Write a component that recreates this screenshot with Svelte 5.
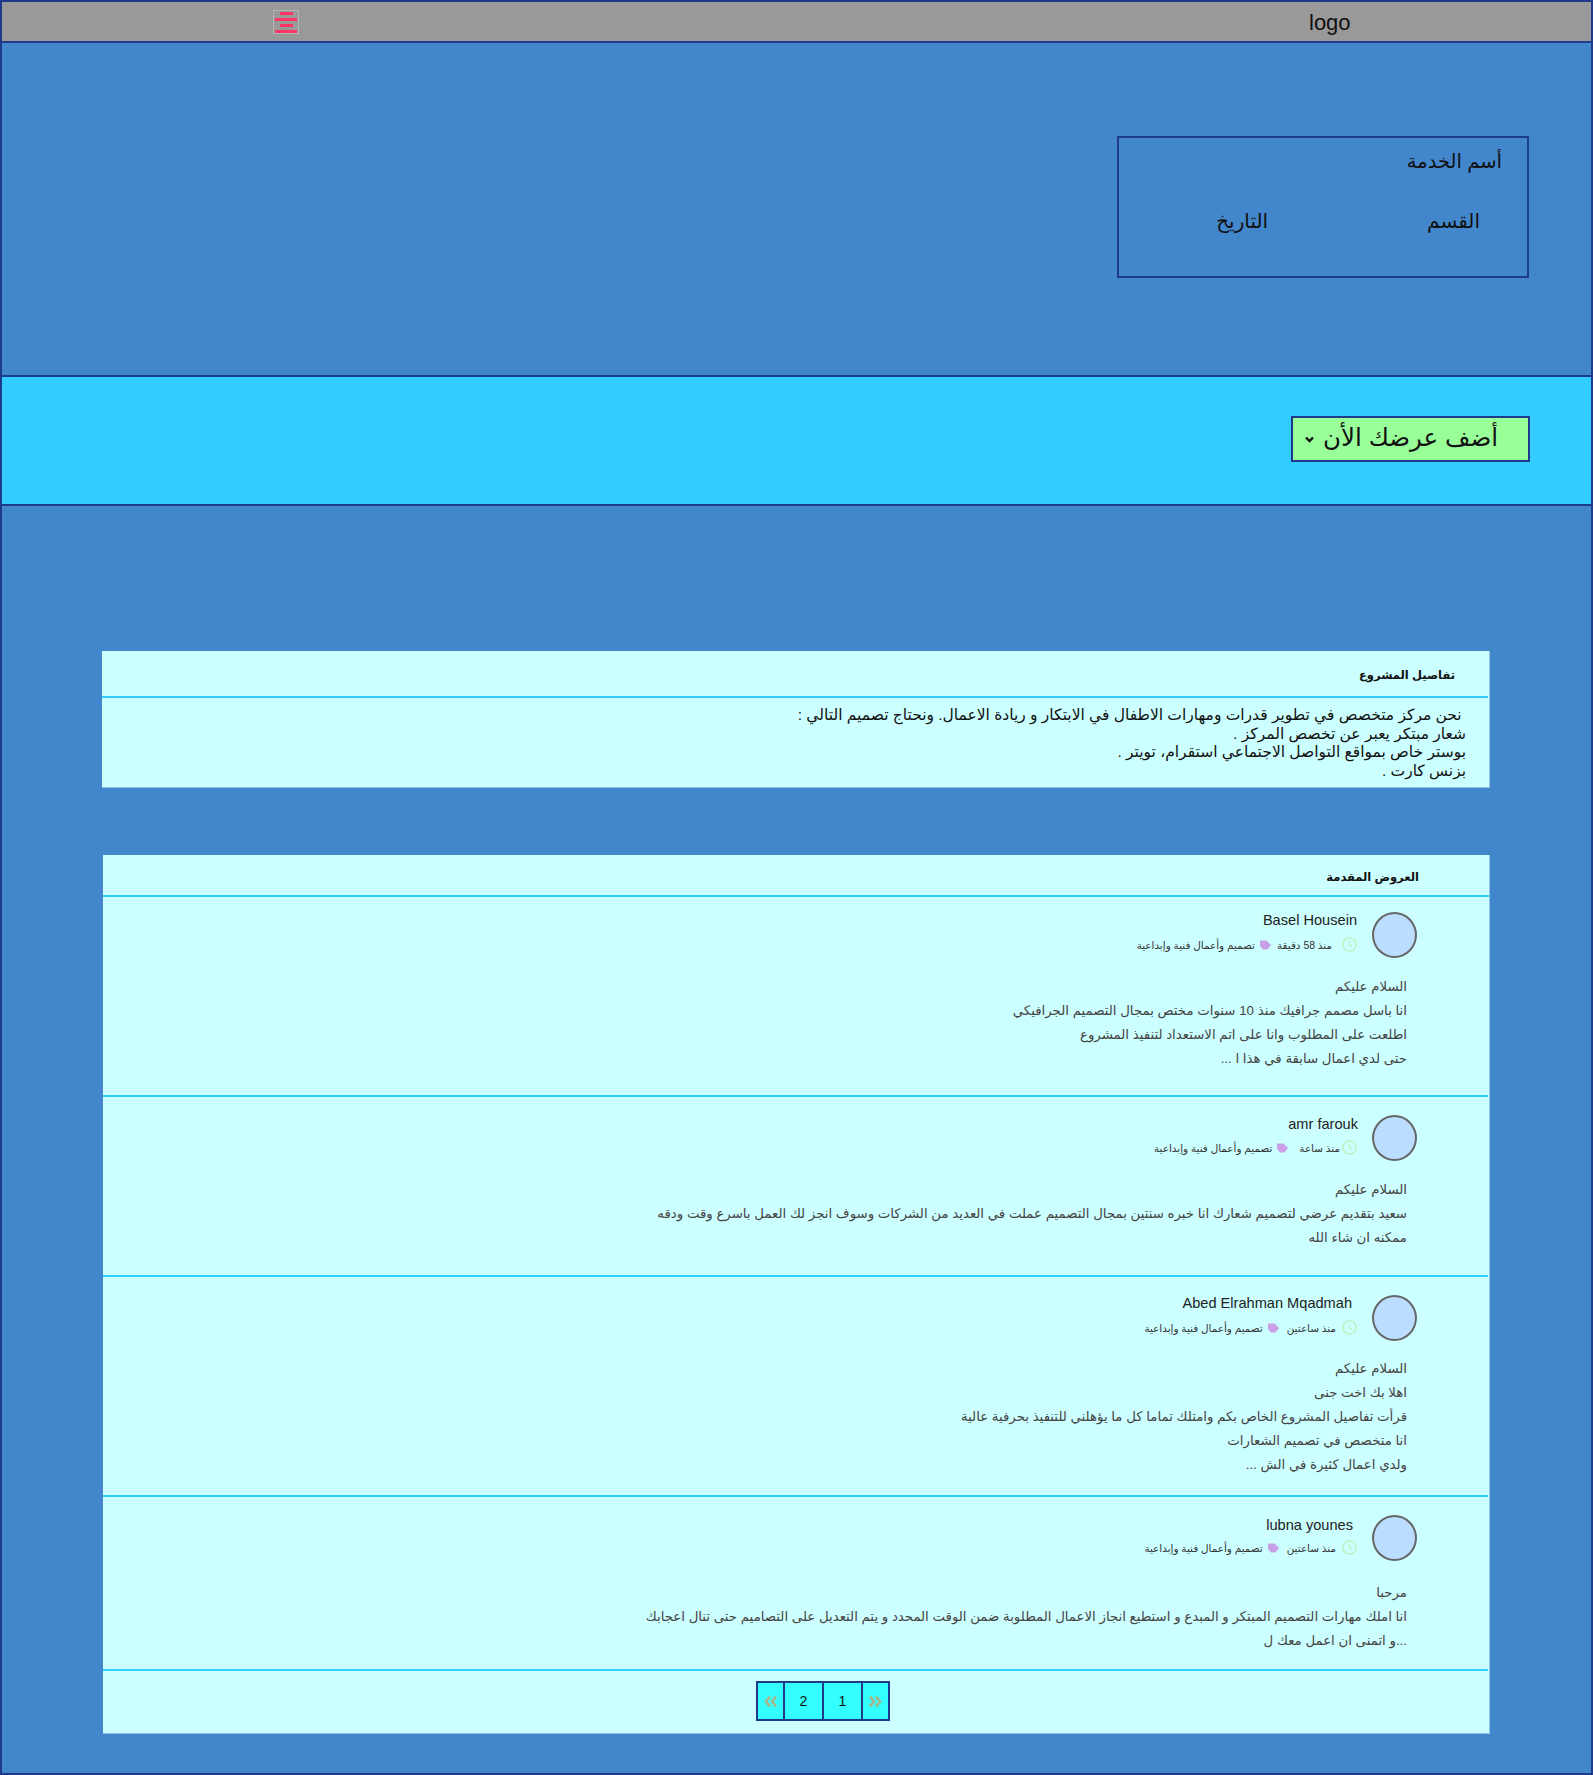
<script>
  const offers = [
    {
      name: "Basel Housein",
      time: "منذ 58 دقيقة",
      cat: "تصميم وأعمال فنية وإبداعية",
      lines: [
        "السلام عليكم",
        "انا باسل مصمم جرافيك منذ 10 سنوات مختص بمجال التصميم الجرافيكي",
        "اطلعت على المطلوب وانا على اتم الاستعداد لتنفيذ المشروع",
        "حتى لدي اعمال سابقة في هذا ا ...",
      ],
    },
    {
      name: "amr farouk",
      time: "منذ ساعة",
      cat: "تصميم وأعمال فنية وإبداعية",
      lines: [
        "السلام عليكم",
        "سعيد بتقديم عرضي لتصميم شعارك انا خبره سنتين بمجال التصميم عملت في العديد من الشركات وسوف انجز لك العمل باسرع وقت ودقه",
        "ممكنه ان شاء الله",
      ],
    },
    {
      name: "Abed Elrahman Mqadmah",
      time: "منذ ساعتين",
      cat: "تصميم وأعمال فنية وإبداعية",
      lines: [
        "السلام عليكم",
        "اهلا بك اخت جنى",
        "قرأت تفاصيل المشروع الخاص بكم وامتلك تماما كل ما يؤهلني للتنفيذ بحرفية عالية",
        "انا متخصص في تصميم الشعارات",
        "ولدي اعمال كثيرة في الش ...",
      ],
    },
    {
      name: "lubna younes",
      time: "منذ ساعتين",
      cat: "تصميم وأعمال فنية وإبداعية",
      lines: [
        "مرحبا",
        "انا املك مهارات التصميم المبتكر و المبدع و استطيع انجاز الاعمال المطلوبة ضمن الوقت المحدد و يتم التعديل على التصاميم حتى تنال اعجابك",
        "...و اتمنى ان اعمل معك ل",
      ],
    },
  ];
</script>

<div class="page">
  <header class="topbar">
    <button class="menu" aria-label="menu">
      <span class="short"></span>
      <span></span>
      <span class="short"></span>
      <span></span>
    </button>
    <div class="logo">logo</div>
  </header>

  <section class="hero">
    <div class="service">
      <h2>أسم الخدمة</h2>
      <div class="meta">
        <span>القسم</span>
        <span>التاريخ</span>
      </div>
    </div>
  </section>

  <section class="action">
    <button class="add">
      <span>أضف عرضك الأن</span>
      <svg width="9" height="7" viewBox="0 0 9 7"><path d="M1 1.5 4.5 5 8 1.5" fill="none" stroke="#111" stroke-width="2.4" /></svg>
    </button>
  </section>

  <main class="content">
    <div class="card details">
      <h3>تفاصيل المشروع</h3>
      <div class="details-body">
        <p>&nbsp;نحن مركز متخصص في تطوير قدرات ومهارات الاطفال في الابتكار و ريادة الاعمال. ونحتاج تصميم التالي :</p>
        <p>شعار مبتكر يعبر عن تخصص المركز .</p>
        <p>بوستر خاص بمواقع التواصل الاجتماعي استقرام، تويتر .</p>
        <p>بزنس كارت .</p>
      </div>
    </div>

    <div class="card offers">
      <h3>العروض المقدمة</h3>
      {#each offers as offer}
        <article class="offer">
          <div class="head">
            <div class="avatar"></div>
            <div class="who">
              <div class="name">{offer.name}</div>
              <div class="info">
                <svg class="clock" width="15" height="15" viewBox="0 0 15 15"><circle cx="7.5" cy="7.5" r="6.6" fill="none" stroke="#bdf0bd" stroke-width="1.4" /><path d="M7.5 3.8v4.2l2.4 1.1" fill="none" stroke="#bdf0bd" stroke-width="1.2" /></svg>
                <span class="time">{offer.time}</span>
                <svg class="tag" width="11" height="10" viewBox="0 0 11 10"><path d="M0 .5H6.5L11 5 7.5 9.5H3L0 6z" fill="#c9a0e6" /></svg>
                <span class="cat">{offer.cat}</span>
              </div>
            </div>
          </div>
          <div class="text">
            {#each offer.lines as line}
              <div>{line}</div>
            {/each}
          </div>
        </article>
      {/each}
      <nav class="pager">
        <span class="arrow">
          <svg width="13" height="11" viewBox="0 0 13 11"><path d="M6 .5 2 5.5l4 5M12 .5l-4 5 4 5" fill="none" stroke="#a3b88f" stroke-width="2.8" /></svg>
        </span>
        <span>2</span>
        <span>1</span>
        <span class="arrow">
          <svg width="13" height="11" viewBox="0 0 13 11"><path d="M1 .5l4 5-4 5M7 .5l4 5-4 5" fill="none" stroke="#a3b88f" stroke-width="2.8" /></svg>
        </span>
      </nav>
    </div>
  </main>
</div>

<style>
  :global(body) {
    margin: 0;
    background: #4286cc;
  }

  .page {
    width: 1593px;
    height: 1775px;
    font-family: "Liberation Sans", "DejaVu Sans", sans-serif;
    color: #111;
    overflow: hidden;
  }

  .topbar {
    height: 43px;
    box-sizing: border-box;
    background: #999;
    border: 2px solid #1f3a8a;
    display: flex;
    align-items: center;
  }

  .logo {
    margin-left: 1010px;
    padding-top: 2px;
    font-size: 22px;
  }

  .menu {
    margin: 1px 0 0 271px;
    width: 26px;
    height: 24px;
    padding: 1px 0 0;
    box-sizing: border-box;
    background: #999;
    border: 1px solid #b5b5b5;
    display: flex;
    flex-direction: column;
    align-items: center;
    gap: 2.5px;
  }

  .menu span {
    display: block;
    width: 22px;
    height: 3.5px;
    background: #ff3366;
  }

  .menu .short {
    width: 13px;
  }

  .hero {
    height: 332px;
    box-sizing: border-box;
    border-left: 2px solid #1f3a8a;
    border-right: 2px solid #1f3a8a;
    padding: 93px 62px 0 0;
    display: flex;
    justify-content: flex-end;
  }

  .service {
    width: 412px;
    height: 142px;
    box-sizing: border-box;
    border: 2px solid #1f3a8a;
    direction: rtl;
    padding: 8px 25px 0 0;
  }

  .service h2 {
    margin: 0;
    font-size: 19.5px;
    font-weight: 400;
    line-height: 30px;
  }

  .meta {
    display: flex;
    gap: 159px;
    margin-top: 30px;
    padding-right: 22px;
    font-size: 20px;
    line-height: 30px;
  }

  .action {
    height: 131px;
    box-sizing: border-box;
    background: #33ccff;
    border: 2px solid #1f3a8a;
    display: flex;
    justify-content: flex-end;
    padding: 39px 61px 0 0;
  }

  .add {
    width: 239px;
    height: 46px;
    box-sizing: border-box;
    background: #99ff99;
    border: 2px solid #1f3a8a;
    direction: rtl;
    display: flex;
    align-items: center;
    justify-content: space-between;
    padding: 0 30px 3px 12px;
    font: inherit;
    font-size: 24.5px;
    color: #111;
  }

  .add svg {
    margin-top: 4px;
  }

  .content {
    height: 1269px;
    box-sizing: border-box;
    border: 2px solid #1f3a8a;
    border-top: 0;
    padding: 145px 101px 0 100px;
    direction: rtl;
  }

  .card {
    background: #ccffff;
    border-right: 1px solid #8cc4e4;
    border-bottom: 1px solid #8cc4e4;
    box-sizing: border-box;
  }

  .card h3 {
    margin: 0;
    font-size: 11.5px;
    font-weight: 700;
    border-bottom: 2px solid #33ccff;
    box-sizing: border-box;
  }

  .details {
    height: 137px;
    margin-bottom: 67px;
  }

  .details h3 {
    padding: 17px 33px 0 0;
    height: 47px;
    margin-right: 1px;
  }

  .details-body {
    padding: 8px 23px 0 0;
    font-size: 15.5px;
    line-height: 18.5px;
  }

  .details-body p {
    margin: 0;
  }

  .offers {
    height: 879px;
    margin-left: 1px;
  }

  .offers h3 {
    height: 42px;
    padding: 15px 70px 0 0;
  }

  .offer {
    border-bottom: 2px solid #33ccff;
    margin-right: 1px;
    padding: 18px 71px 0 0;
    box-sizing: border-box;
  }

  .offer:nth-of-type(1) { height: 200px; padding-top: 15px; }
  .offer:nth-of-type(2) { height: 180px; }
  .offer:nth-of-type(3) { height: 220px; }
  .offer:nth-of-type(4) { height: 174px; }

  .head {
    display: flex;
    gap: 15px;
    height: 46px;
    margin-bottom: 17px;
  }

  .offer:nth-of-type(3) .head { margin-bottom: 16px; }
  .offer:nth-of-type(4) .head { margin-bottom: 20px; }

  .avatar {
    width: 45px;
    height: 46px;
    box-sizing: border-box;
    border-radius: 50%;
    background: #bbddff;
    border: 2px solid #666;
  }

  .name {
    height: 18px;
    margin-bottom: 7px;
    font-size: 14.6px;
    line-height: 18px;
    color: #222;
  }

  /* the names don't line up from one row to the next */
  .offer:nth-of-type(1) .name { margin-top: -1px; margin-bottom: 8px; }
  .offer:nth-of-type(2) .name { margin-right: -1px; }
  .offer:nth-of-type(3) .name { margin-top: -1px; margin-bottom: 8px; margin-right: 5px; }
  .offer:nth-of-type(4) .name { margin-top: 1px; margin-bottom: 6px; margin-right: 4px; }

  .info {
    display: flex;
    align-items: center;
    font-size: 10.4px;
    color: #333;
  }

  .time {
    margin: 0 6px 0 8px;
  }

  .offer:nth-of-type(1) .time { margin: 0 10px 0 6px; }
  .offer:nth-of-type(2) .time { margin: 0 2px 0 11px; }

  .cat {
    margin-right: 5px;
  }

  .text {
    margin-right: 10px;
    font-size: 13.3px;
    line-height: 24.1px;
    color: #444;
  }

  .pager {
    display: flex;
    gap: 2px;
    width: fit-content;
    margin: 10px auto 0;
    margin-right: 599px;
    padding: 2px;
    background: #1f3a8a;
    direction: ltr;
  }

  .pager span {
    width: 37px;
    height: 36px;
    line-height: 36px;
    text-align: center;
    background: #33ffff;
    font-size: 14px;
  }

  .pager .arrow {
    width: 25px;
    display: flex;
    align-items: center;
    justify-content: center;
  }
</style>
